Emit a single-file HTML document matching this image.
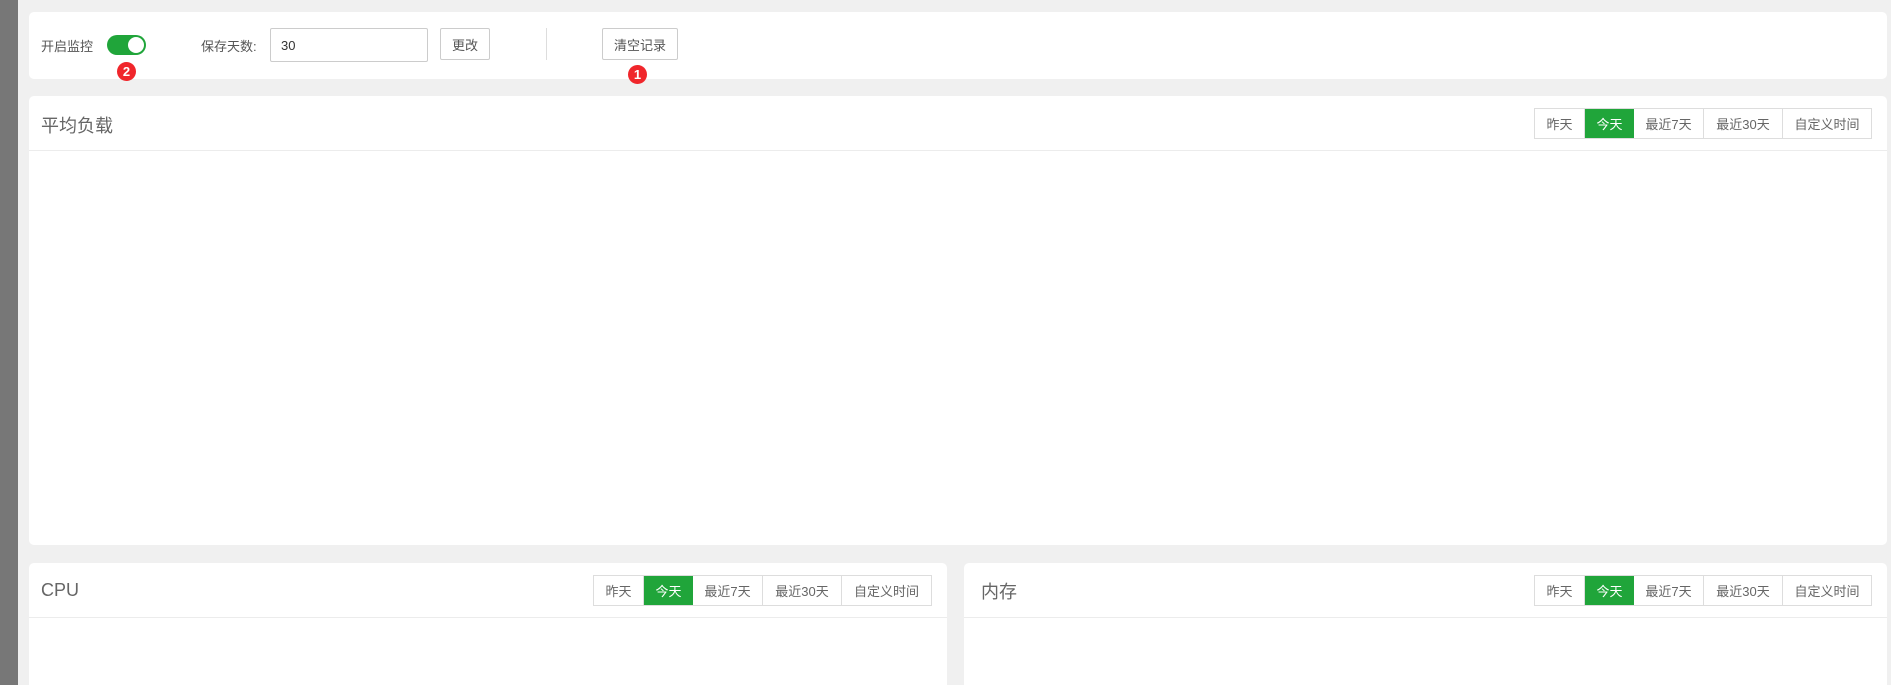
<!DOCTYPE html>
<html style="overflow:hidden;width:1891px;height:685px"><head><meta charset="utf-8"><style>
*{box-sizing:border-box;margin:0;padding:0}
body{width:1891px;height:685px;overflow:hidden;background:#f0f0f0;position:relative;font-family:"Liberation Sans","Noto Sans CJK SC",sans-serif;color:#555}
.bar{position:absolute;left:0;top:0;width:18px;height:685px;background:#777}
.p{position:absolute;background:#fff;border-radius:5px}
.abs{position:absolute}
.btn{position:absolute;border:1px solid #ccc;border-radius:2px;background:#fff;font-size:13px;color:#555;display:flex;align-items:center;justify-content:center}
.badge{position:absolute;width:19px;height:19px;border-radius:50%;background:#f0262b;color:#fff;font-size:13px;display:flex;align-items:center;justify-content:center;font-weight:bold}
.title{position:absolute;font-size:18px;color:#666}
.line{position:absolute;left:0;right:0;height:1px;background:#ececec}
.grp{position:absolute;display:flex;height:31px;border:1px solid #ddd;font-size:13px;color:#666}
.grp div{display:flex;align-items:center;justify-content:center;border-right:1px solid #ddd}
.grp div:last-child{border-right:none}
.grp .on{background:#20a53a;color:#fff;border-right:none}
</style></head><body>
<div class="bar"></div>
<div class="p" style="left:29px;top:12px;width:1858px;height:67px">
  <div class="abs" style="left:12px;top:24px;font-size:13px;color:#555">开启监控</div>
  <div class="abs" style="left:78px;top:23px;width:39px;height:20px;border-radius:10px;background:#20a53a"><div class="abs" style="right:2px;top:2px;width:16px;height:16px;border-radius:50%;background:#fff"></div></div>
  <div class="badge" style="left:88px;top:50px">2</div>
  <div class="abs" style="left:172px;top:24px;font-size:13px;color:#555">保存天数:</div>
  <div class="abs" style="left:241px;top:16px;width:158px;height:34px;border:1px solid #ccc;border-radius:2px;font-size:13px;color:#333;padding:9px 10px">30</div>
  <div class="btn" style="left:411px;top:16px;width:50px;height:32px">更改</div>
  <div class="abs" style="left:517px;top:16px;width:1px;height:32px;background:#ddd"></div>
  <div class="btn" style="left:573px;top:16px;width:76px;height:32px">清空记录</div>
  <div class="badge" style="left:599px;top:53px">1</div>
</div>
<div class="p" style="left:29px;top:96px;width:1858px;height:449px">
  <div class="title" style="left:12px;top:16px">平均负载</div>
  <div class="line" style="top:54px"></div>
  <div class="grp" style="left:1505px;top:12px;width:338px">
    <div style="width:50px">昨天</div><div class="on" style="width:49px">今天</div><div style="width:70px">最近7天</div><div style="width:79px">最近30天</div><div style="width:88px">自定义时间</div>
  </div>
</div>
<div class="p" style="left:29px;top:563px;width:918px;height:122px;border-radius:5px 5px 0 0">
  <div class="title" style="left:12px;top:17px">CPU</div>
  <div class="line" style="top:54px"></div>
  <div class="grp" style="left:564px;top:12px;width:339px">
    <div style="width:50px">昨天</div><div class="on" style="width:49px">今天</div><div style="width:70px">最近7天</div><div style="width:79px">最近30天</div><div style="width:89px">自定义时间</div>
  </div>
</div>
<div class="p" style="left:964px;top:563px;width:923px;height:122px;border-radius:5px 5px 0 0">
  <div class="title" style="left:17px;top:15px">内存</div>
  <div class="line" style="top:54px"></div>
  <div class="grp" style="left:570px;top:12px;width:338px">
    <div style="width:50px">昨天</div><div class="on" style="width:49px">今天</div><div style="width:70px">最近7天</div><div style="width:79px">最近30天</div><div style="width:88px">自定义时间</div>
  </div>
</div>
</body></html>
